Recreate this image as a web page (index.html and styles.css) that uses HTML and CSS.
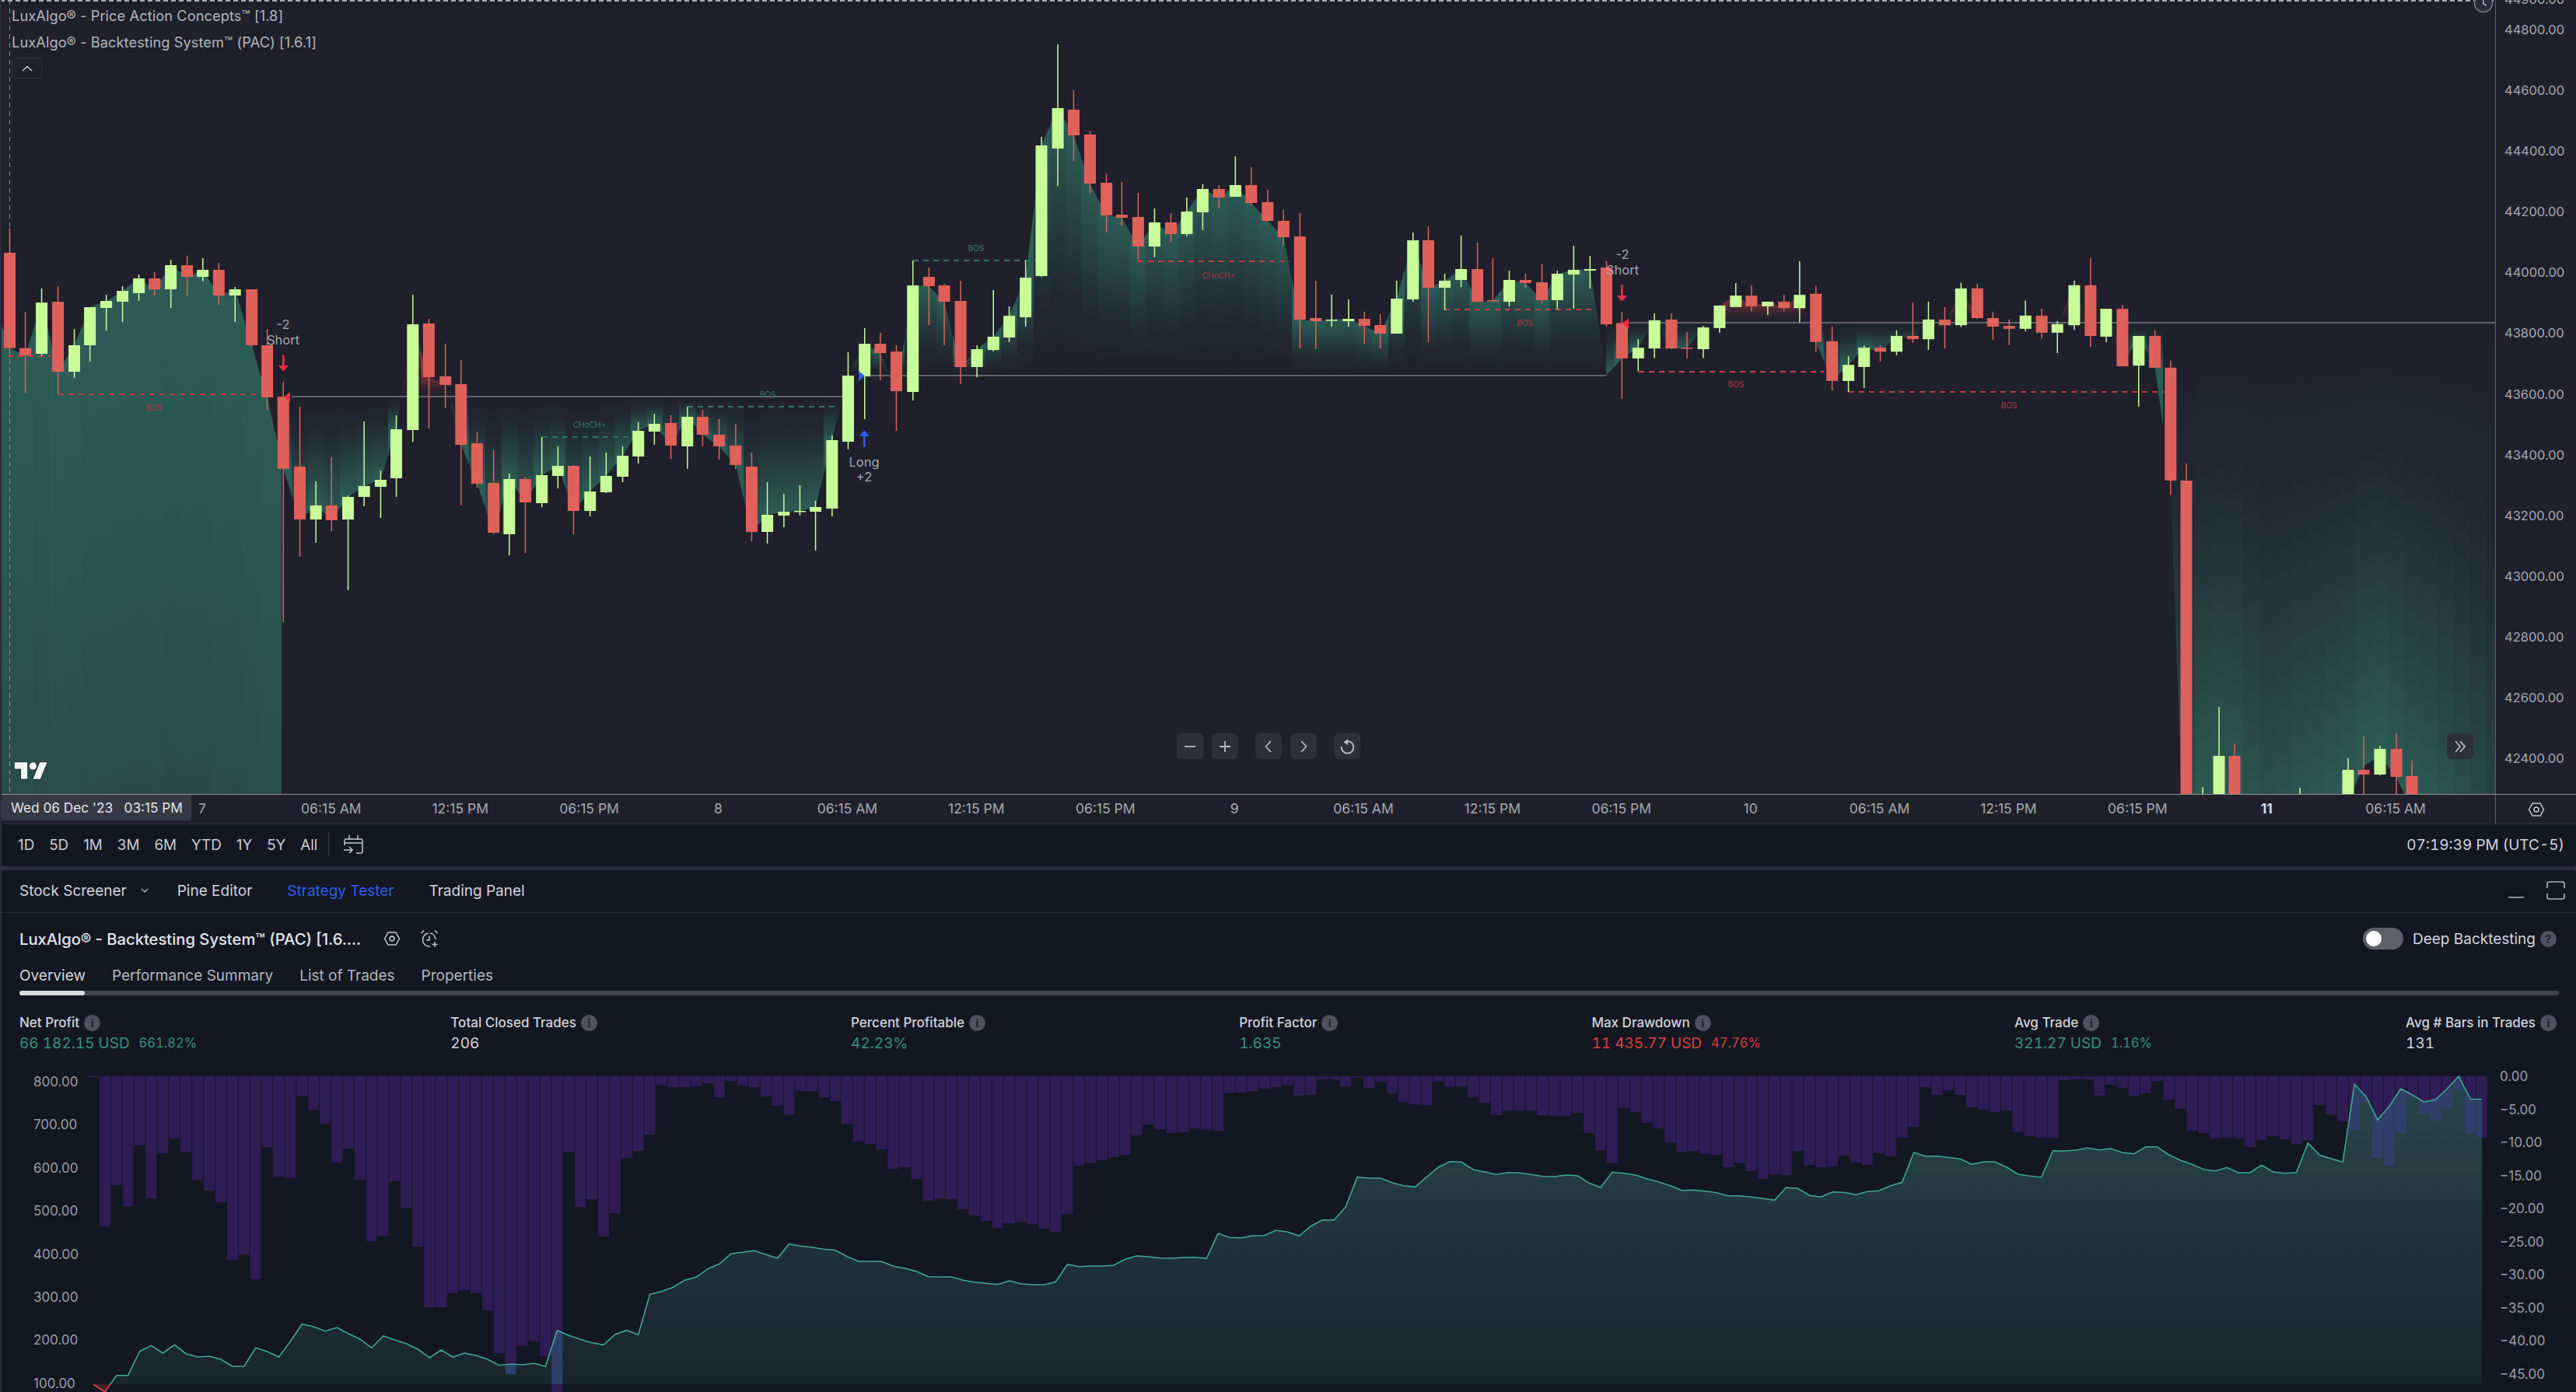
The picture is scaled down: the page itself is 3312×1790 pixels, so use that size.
FILE: index.html
```html
<!DOCTYPE html>
<html lang="en">
<head>
<meta charset="utf-8">
<title>LuxAlgo Backtesting</title>
<link rel="stylesheet" href="styles.css">
</head>
<body>
<div class="app">
  <section class="chart-row">
    <div class="pane">
      <svg id="price" class="price-svg" viewBox="2 0 3206 1021" width="3206" height="1021">
        <defs id="priceDefs"></defs>
        <g id="zones"></g>
        <g class="level-lines">
          <line x1="375" y1="510" x2="1083" y2="510"/>
          <line x1="1116" y1="483" x2="2065" y2="483"/>
          <line x1="2095" y1="415" x2="3208" y2="415"/>
        </g>
        <g class="dash-teal">
          <line x1="697" y1="562" x2="811" y2="562"/>
          <line x1="884" y1="523" x2="1075" y2="523"/>
          <line x1="1174" y1="335" x2="1332" y2="335"/>
        </g>
        <g class="dash-red">
          <line x1="10" y1="458" x2="65" y2="458"/>
          <line x1="75" y1="507" x2="329" y2="507"/>
          <line x1="1463" y1="336" x2="1659" y2="336"/>
          <line x1="1857" y1="398" x2="2048" y2="398"/>
          <line x1="2107" y1="478" x2="2345" y2="478"/>
          <line x1="2377" y1="504" x2="2782" y2="504"/>
        </g>
        <g id="candles"></g>
        <line class="cross-h" x1="0" y1="1" x2="3208" y2="1"/>
        <line class="cross-v" x1="12.5" y1="0" x2="12.5" y2="1021"/>
        <g class="struct-teal">
          <text x="758" y="550">CHoCH+</text>
          <text x="987" y="511">BOS</text>
          <text x="1255" y="323">BOS</text>
        </g>
        <g class="struct-red">
          <text x="198" y="528">BOS</text>
          <text x="1567" y="358">CHoCH+</text>
          <text x="1961" y="419">BOS</text>
          <text x="2232" y="498">BOS</text>
          <text x="2583" y="525">BOS</text>
        </g>
        <g class="trade-label">
          <text x="364" y="423">-2</text>
          <text x="364" y="443">Short</text>
          <text x="2086" y="333">-2</text>
          <text x="2086" y="353">Short</text>
          <text x="1111" y="600">Long</text>
          <text x="1111" y="619">+2</text>
        </g>
        <g class="arrow-red">
          <path d="M363 456h2.500v14H371l-6.700 7.500-6.800-7.500h5.500z"/>
          <path d="M2084 366h2.500v14h5.500l-6.700 7.500-6.800-7.500h5.500z"/>
          <path d="M373 504v13l-8-6.500z"/>
          <path d="M2094 409v14l-8-7z"/>
        </g>
        <path class="arrow-blue" d="M1110 575h2.500v-14h5.500l-6.700-7.500-6.800 7.500h5.500z"/>
        <path class="arrow-blue" d="M1104 477v13l8-6.500z"/>
      </svg>

      <div class="legend">
        <div class="legend-line">LuxAlgo® - Price Action Concepts™ [1.8]</div>
        <div class="legend-line">LuxAlgo® - Backtesting System™ (PAC) [1.6.1]</div>
        <div class="legend-toggle">
          <svg viewBox="0 0 14 8" width="14" height="8"><path d="M1 7l6-5.500L13 7"/></svg>
        </div>
      </div>

      <svg class="tv-logo" viewBox="-1 2 38 22" width="46" height="26">
        <path d="M14 22H7V11H0V4h14v18zM28 22h-8l7.500-18h8L28 22z"/>
        <circle cx="20" cy="8" r="4"/>
      </svg>

      <div class="nav-buttons">
        <div class="nav-group">
          <div class="nav-btn"><svg viewBox="0 0 18 18" width="18" height="18"><path d="M2 9h14"/></svg></div>
          <div class="nav-btn"><svg viewBox="0 0 18 18" width="18" height="18"><path d="M2 9h14M9 2v14"/></svg></div>
        </div>
        <div class="nav-group">
          <div class="nav-btn"><svg viewBox="0 0 18 18" width="18" height="18"><path d="M12 2L5.500 9l6.500 7"/></svg></div>
          <div class="nav-btn"><svg viewBox="0 0 18 18" width="18" height="18"><path d="M6 2l6.500 7L6 16"/></svg></div>
        </div>
        <div class="nav-btn"><svg viewBox="0 0 18 18" width="20" height="20"><path d="M6.500 3.500a7 7 0 1 1-4 5.500"/><path class="solid" d="M10 0.500v7L4.800 4z"/></svg></div>
      </div>
      <div class="nav-btn go-end"><svg viewBox="0 0 18 18" width="18" height="18"><path d="M3 2l6 7-6 7M9 2l6 7-6 7"/></svg></div>
      <svg class="axis-badge" viewBox="0 0 26 26" width="26" height="26"><circle cx="13" cy="13" r="11.500"/><path d="M13 8v6l4 2"/></svg>
    </div>

    <aside class="price-axis">
      <ul class="price-list">
        <li>44900.00</li><li>44800.00</li><li>44600.00</li><li>44400.00</li><li>44200.00</li>
        <li>44000.00</li><li>43800.00</li><li>43600.00</li><li>43400.00</li><li>43200.00</li>
        <li>43000.00</li><li>42800.00</li><li>42600.00</li><li>42400.00</li>
      </ul>
    </aside>
  </section>

  <section class="time-row">
    <div class="time-axis">
      <span>7</span><span>06:15 AM</span><span>12:15 PM</span><span>06:15 PM</span>
      <span>8</span><span>06:15 AM</span><span>12:15 PM</span><span>06:15 PM</span>
      <span>9</span><span>06:15 AM</span><span>12:15 PM</span><span>06:15 PM</span>
      <span>10</span><span>06:15 AM</span><span>12:15 PM</span><span>06:15 PM</span>
      <span class="strong">11</span><span>06:15 AM</span>
      <div class="date-tip">Wed 06 Dec '23&nbsp;&nbsp; 03:15 PM</div>
    </div>
    <div class="axis-settings">
      <svg viewBox="0 0 24 24" width="24" height="24"><path d="M2.500 12L7 4h10l4.500 8-4.500 8H7z"/><circle cx="12" cy="12" r="3"/></svg>
    </div>
  </section>

  <section class="range-bar">
    <div class="ranges">
      <span>1D</span><span>5D</span><span>1M</span><span>3M</span><span>6M</span><span>YTD</span><span>1Y</span><span>5Y</span><span>All</span>
    </div>
    <i class="sep"></i>
    <svg class="goto-icon" viewBox="0 0 28 26" width="28" height="26">
      <path d="M8 1v6M19 1v6M2 14V7.500Q2 6 3.500 6h20Q25 6 25 7.500V22.500Q25 24 23.500 24H17M2 11h23M1 20h11M8 16l4 4-4 4"/>
    </svg>
    <div class="clock">07:19:39 PM (UTC-5)</div>
  </section>

  <section class="panel">
    <nav class="panel-tabs">
      <span class="panel-tab with-caret">Stock Screener
        <svg viewBox="0 0 10 6" width="10" height="6"><path d="M1 1l4 4 4-4"/></svg>
      </span>
      <span class="panel-tab">Pine Editor</span>
      <span class="panel-tab active">Strategy Tester</span>
      <span class="panel-tab">Trading Panel</span>
      <span class="panel-actions">
        <svg viewBox="0 0 20 24" width="20" height="24"><path d="M0 21h20"/></svg>
        <svg viewBox="0 0 24 24" width="24" height="24"><path d="M1 9V3.500Q1 1 3.500 1h17Q23 1 23 3.500V9M1 16v4.500Q1 23 3.500 23h17q2.500 0 2.500-2.500V16"/></svg>
      </span>
    </nav>

    <div class="title-row">
      <div class="strategy-name">LuxAlgo® - Backtesting System™ (PAC) [1.6....</div>
      <svg class="title-icon" viewBox="0 0 24 24" width="24" height="24"><path d="M2.500 12L7 4h10l4.500 8-4.500 8H7z"/><circle cx="12" cy="12" r="3"/></svg>
      <svg class="title-icon" viewBox="0 0 24 24" width="24" height="24"><path d="M11 5a8.500 8.500 0 1 0 2 17M13 5a8.500 8.500 0 0 1 7 8M1.500 5L5 1.500M22.500 5L19 1.500M12 8.500V14H8M19 16v7M15.500 19.500h7"/></svg>
      <div class="deep">
        <span class="toggle"><span class="thumb"></span></span>
        <span class="deep-label">Deep Backtesting</span>
        <span class="hint">?</span>
      </div>
    </div>

    <nav class="sub-tabs">
      <span class="sub-tab current">Overview</span>
      <span class="sub-tab">Performance Summary</span>
      <span class="sub-tab">List of Trades</span>
      <span class="sub-tab">Properties</span>
    </nav>
    <div class="scroll-track"><div class="scroll-thumb"></div></div>

    <div class="stats">
      <div class="stat">
        <div class="stat-label">Net Profit <span class="hint">i</span></div>
        <div class="stat-value up">66 182.15 USD<small>661.82%</small></div>
      </div>
      <div class="stat">
        <div class="stat-label">Total Closed Trades <span class="hint">i</span></div>
        <div class="stat-value">206</div>
      </div>
      <div class="stat">
        <div class="stat-label">Percent Profitable <span class="hint">i</span></div>
        <div class="stat-value up">42.23%</div>
      </div>
      <div class="stat">
        <div class="stat-label">Profit Factor <span class="hint">i</span></div>
        <div class="stat-value up">1.635</div>
      </div>
      <div class="stat">
        <div class="stat-label">Max Drawdown <span class="hint">i</span></div>
        <div class="stat-value down">11 435.77 USD<small>47.76%</small></div>
      </div>
      <div class="stat">
        <div class="stat-label">Avg Trade <span class="hint">i</span></div>
        <div class="stat-value up">321.27 USD<small>1.16%</small></div>
      </div>
      <div class="stat">
        <div class="stat-label">Avg # Bars in Trades <span class="hint">i</span></div>
        <div class="stat-value">131</div>
      </div>
    </div>

    <div class="equity-row">
      <ul class="eq-axis left">
        <li>800.00</li><li>700.00</li><li>600.00</li><li>500.00</li><li>400.00</li><li>300.00</li><li>200.00</li><li>100.00</li>
      </ul>
      <svg id="equity" class="equity-svg" viewBox="112 1375 3093 415" width="3093" height="415"></svg>
      <ul class="eq-axis right">
        <li>0.00</li><li>−5.00</li><li>−10.00</li><li>−15.00</li><li>−20.00</li><li>−25.00</li><li>−30.00</li><li>−35.00</li><li>−40.00</li><li>−45.00</li>
      </ul>
    </div>
  </section>
</div>
<script src="chart.js"></script>
</body>
</html>
```

FILE: styles.css
```css
* { box-sizing: border-box; }
html, body { margin: 0; padding: 0; background: #2a2d39; }
body { font-family: Inter, "Liberation Sans", sans-serif; color: #d1d4dc; overflow: hidden; }
ul { list-style: none; margin: 0; padding: 0; }
svg { display: block; }

.app { width: 3312px; height: 1790px; padding-left: 2px; display: flex; flex-direction: column; }

/* main chart */
.chart-row { height: 1021px; display: flex; background: #1f202c; }
.pane { position: relative; width: 3206px; height: 1021px; }
.price-svg { position: absolute; inset: 0; }
.level-lines line { stroke: #62636c; stroke-width: 2; }
.dash-teal line { stroke: #2f7466; stroke-width: 2; stroke-dasharray: 7 6; }
.dash-red line { stroke: #c23f47; stroke-width: 2; stroke-dasharray: 7 6; }
.cross-h { stroke: #a9abb3; stroke-width: 2; stroke-dasharray: 6 4; }
.cross-v { stroke: #8f9199; stroke-width: 1; stroke-dasharray: 6 5; }
.struct-teal text, .struct-red text { font-size: 10px; text-anchor: middle; }
.struct-teal text { fill: #347f71; }
.struct-red text { fill: #b33a42; }
.trade-label text { font-size: 16.500px; fill: #a5a7b0; text-anchor: middle; }
.arrow-red path { fill: #ef2b46; }
.arrow-blue { fill: #2f5ceb; }

.legend { position: absolute; left: 13px; top: 9px; display: flex; flex-direction: column; align-items: flex-start; }
.legend-line { font-size: 18.200px; letter-spacing: 0.1px; line-height: 22px; height: 34px; color: #b2b5be; white-space: nowrap; }
.legend-toggle { width: 38px; height: 27px; margin: -3px 0 0 1px; border: 1px solid #2f323f; border-radius: 4px; display: flex; align-items: center; justify-content: center; }
.legend-toggle path { fill: none; stroke: #c6c8d0; stroke-width: 1.5; }

.tv-logo { position: absolute; left: 15px; top: 978px; }
.tv-logo path, .tv-logo circle { fill: #f4f5f7; stroke: #151722; stroke-width: 1.2; paint-order: stroke; }

.nav-buttons { position: absolute; left: 1511px; top: 943px; display: flex; gap: 22px; }
.nav-group { display: flex; gap: 11px; }
.nav-btn { width: 34px; height: 33px; border-radius: 6px; background: #2d2f3b; display: flex; align-items: center; justify-content: center; }
.nav-btn path { fill: none; stroke: #b7bac3; stroke-width: 1.8; }
.nav-btn path.solid { fill: #b7bac3; stroke: none; }
.go-end { position: absolute; left: 3144px; top: 943px; }

.price-axis { position: relative; width: 104px; height: 1021px; border-left: 1px solid #5f6069; overflow: hidden; }
.price-list { margin-top: -40px; padding-left: 11px; }
.price-list li { font-size: 16.500px; line-height: 78.1px; height: 78.1px; color: #a5a8b1; white-space: nowrap; }
.price-list li:first-child { height: 39px; }
.axis-badge { position: absolute; left: 3178px; top: -9px; }
.axis-badge circle { fill: #2a2d39; stroke: #787b85; stroke-width: 1.5; }
.axis-badge path { fill: none; stroke: #b2b5be; stroke-width: 1.5; }

/* time axis */
.time-row { height: 39px; display: flex; background: #1f202c; border-top: 1px solid #8d8f97; border-bottom: 1px solid #2b2d38; }
.time-axis { position: relative; width: 3206px; padding: 0 0 2px 175px; display: grid; grid-template-columns: repeat(18, 165.9px); align-items: center; font-size: 17.500px; color: #a5a8b1; text-align: center; }
.time-axis .strong { color: #d1d4dc; font-weight: 700; }
.date-tip { position: absolute; left: 0; top: 0; width: 244px; height: 33px; line-height: 33px; padding-left: 12px; background: #363945; border-radius: 0 0 4px 4px; color: #e3e5ea; font-size: 17.200px; text-align: left; white-space: nowrap; }
.axis-settings { width: 104px; border-left: 1px solid #5f6069; display: flex; align-items: center; justify-content: center; padding-left: 1px; }
.axis-settings path, .axis-settings circle, .title-icon path, .title-icon circle { fill: none; stroke: #c3c6ce; stroke-width: 1.5; }

/* range bar */
.range-bar { height: 54px; display: flex; align-items: center; background: #131722; padding: 0 15px 2px 21px; border-radius: 0 0 4px 4px; }
.ranges { display: flex; gap: 19px; font-size: 18.800px; color: #c9ccd4; }
.sep { width: 1px; height: 31px; background: #363a45; margin: 0 18px 0 14px; }
.goto-icon path { fill: none; stroke: #c3c6ce; stroke-width: 1.5; }
.clock { margin-left: auto; font-size: 19px; font-variant-numeric: tabular-nums; color: #d1d4dc; }

/* bottom panel */
.panel { flex: 1; margin-top: 5px; background: #131722; border-radius: 4px 4px 0 0; display: flex; flex-direction: column; min-height: 0; }
.panel-tabs { height: 55px; flex: none; display: flex; align-items: center; gap: 45px; padding: 0 14px 2px 23px; border-bottom: 1px solid #2a2d38; font-size: 19px; color: #d1d4dc; }
.panel-tab { white-space: nowrap; }
.panel-tab.active { color: #2f5fea; }
.with-caret { display: flex; align-items: center; gap: 18px; margin-right: -8px; }
.with-caret path { fill: none; stroke: #b2b5be; stroke-width: 1.4; }
.panel-actions { margin-left: auto; display: flex; align-items: center; gap: 29px; }
.panel-actions path { fill: none; stroke: #b2b5be; stroke-width: 1.6; }

.title-row { height: 68px; flex: none; display: flex; align-items: center; padding: 0 25px 2px 23px; }
.strategy-name { width: 442px; font-size: 20.200px; font-weight: 500; color: #e3e5ea; white-space: nowrap; }
.title-icon { margin-right: 24px; }
.title-icon:first-of-type { margin-left: 25px; }
.deep { margin-left: auto; display: flex; align-items: center; }
.toggle { width: 52px; height: 28px; border-radius: 14px; background: #5d606b; padding: 4px; display: block; }
.thumb { display: block; width: 20px; height: 20px; border-radius: 50%; background: #fff; }
.deep-label { margin: 0 6px 0 12px; font-size: 19px; color: #d1d4dc; }
.hint { display: inline-flex; flex: none; width: 21px; height: 21px; border-radius: 50%; background: #4f525e; color: #1c1f2a; font-size: 14px; font-weight: 700; align-items: center; justify-content: center; }

.sub-tabs { height: 26px; flex: none; display: flex; align-items: center; gap: 34px; padding: 0 0 2px 23px; font-size: 19px; color: #b2b5be; }
.sub-tab.current { color: #d1d4dc; }
.scroll-track { height: 6px; flex: none; margin: 6px 22px 0 23px; border-radius: 3px; background: #41444f; }
.scroll-thumb { width: 84px; height: 6px; border-radius: 3px; background: #d8dae0; }

.stats { flex: none; display: flex; justify-content: space-between; padding: 23px 25px 0 23px; }
.stat-label { height: 24px; display: flex; align-items: center; gap: 6px; font-size: 17px; font-weight: 500; color: #d1d4dc; white-space: nowrap; }
.stat-value { height: 26px; margin-top: 1px; display: flex; align-items: center; font-size: 19px; font-variant-numeric: tabular-nums; color: #d1d4dc; white-space: nowrap; }
.stat-value small { margin-left: 12px; font-size: 16.600px; }
.up { color: #37917f; }
.down { color: #dc4041; }

.equity-row { flex: 1; min-height: 0; margin-top: 21px; display: grid; grid-template-columns: 110px 3093px 107px; }
.equity-svg { width: 3093px; height: 415px; }
.eq-axis { font-size: 17px; color: #9a9da6; white-space: nowrap; }
.eq-axis.left { margin-top: -11px; padding-left: 41px; }
.eq-axis.left li { height: 55.4px; line-height: 55.4px; }
.eq-axis.right { margin-top: -12px; padding-left: 9px; }
.eq-axis.right li { height: 42.55px; line-height: 42.55px; }
```

FILE: chart.js
```js
/* Candle readings: [colour, x, bodyTop, bodyBottom, wickTop, wickBottom, closeOverride, glowFrom] */
var candles = [];
function seg(x0, y0, fx, fy, rows) {
  rows.forEach(function (r) {
    var cl = r[6] !== undefined ? y0 + r[6] / fy : (r[0] === 'g' ? y0 + r[2] / fy : y0 + r[3] / fy);
    candles.push({ c: r[0], x: x0 + r[1] / fx, t: y0 + r[2] / fy, b: y0 + r[3] / fy, wt: y0 + r[4] / fy, wb: y0 + r[5] / fy, close: cl, glow: r[7] });
  });
}
seg(0, 0, 1, 1, [['g', -8, 2000, 2001, 2000, 2001, 390]]);
seg(0, 0, 2.24, 3, [
  ['r',28,975,1343,880,1360],['r',73,1343,1371,1203,1515],['g',120,1167,1365,1113,1373],['r',167,1164,1434,1104,1520],
  ['g',214,1332,1434,1270,1458],['g',259,1185,1332,1185,1395],['g',306,1161,1188,1137,1275],['g',353,1122,1164,1104,1242],
  ['g',400,1074,1131,1059,1161],['r',445,1074,1116,1050,1140],['g',492,1023,1116,1002,1188],['r',539,1023,1068,987,1140],
  ['g',584,1041,1068,996,1086],['r',630,1041,1140,1014,1176],['g',677,1116,1140,1107,1242],['r',725,1116,1332,1116,1338]
]);
seg(300, 300, 1.742, 3, [
  ['r',76,432,633,370,683],['r',112,630,908,573,1500],['r',149,900,1104,669,1248],['g',185,1050,1104,957,1194],
  ['r',220,1050,1107,864,1149],['g',257,1017,1104,1011,1377],['g',293,975,1017,726,1053],['g',330,951,978,915,1098],
  ['g',365,756,945,702,1017],['g',402,351,759,237,804],['r',438,348,555,330,753],['r',475,552,585,426,675],
  ['r',510,582,816,489,1050],['r',546,810,966,768,981],['r',583,963,1155,837,1161],['g',618,948,1161,927,1242],
  ['r',654,948,1038,939,1233],['g',691,933,1041,786,1056],['g',727,897,936,822,984],['r',762,897,1071,894,1161],
  ['g',799,996,1071,861,1092],['g',835,936,999,846,1002],['g',872,858,939,822,960],['g',907,762,861,729,888],
  ['g',943,735,765,696,816],['r',980,732,819,702,870],['g',1017,708,822,669,909],['r',1051,708,777,681,822],
  ['r',1088,777,822,717,873],['r',1125,819,894,735,909],['r',1161,900,1152,846,1188],['g',1196,1086,1152,960,1197],
  ['g',1233,1074,1089,1005,1134],['g',1269,1071,1074,972,1089],['g',1304,1056,1074,1032,1224],['g',1341,798,1062,780,1092],
  ['g',1377,549,804,459,834],['g',1414,426,552,366,717],['r',1449,426,462,384,567],['r',1485,456,609,432,762],
  ['g',1522,201,612,105,645],['r',1558,168,204,132,354]
]);
seg(1200, 0, 1.568, 3, [
  ['r',22,1101,1164,1095,1332],['r',55,1161,1416,1083,1482],['g',88,1347,1416,1332,1455],['g',121,1299,1350,1119,1355],
  ['g',153,1218,1302,1182,1320],['g',186,1071,1224,1005,1260],['g',218,561,1065,528,1068],['g',251,417,573,171,717],
  ['r',283,423,522,348,621],['r',316,519,708,504,747],['r',349,705,831,669,897],['r',380,828,840,702,870],
  ['r',413,837,951,744,1005],['g',446,858,951,804,993],['r',479,858,903,822,936],['g',511,816,903,762,912],
  ['g',543,729,819,711,888],['r',576,729,762,714,804],['g',609,714,759,603,760],['r',641,714,783,645,792],
  ['r',674,780,852,732,855],['r',706,852,915,810,945],['r',739,912,1233,822,1344],['r',771,1227,1239,1083,1347],
  ['g',803,1233,1236,1137,1260],['g',837,1230,1239,1155,1260],['r',869,1230,1257,1203,1326],['r',901,1254,1287,1212,1344],
  ['g',934,1152,1287,1083,1287],['g',967,927,1155,897,1164],['r',998,927,1110,873,1320],['g',1031,1083,1110,1056,1197],
  ['g',1064,1038,1080,909,1107],['r',1097,1038,1164,936,1167],['r',1128,1158,1161,996,1161],['g',1161,1080,1164,1044,1182],
  ['r',1194,1080,1092,1056,1110],['r',1227,1089,1158,1020,1170],['g',1258,1056,1158,1044,1194],['g',1291,1041,1059,948,1191],
  ['g',1324,1038,1044,987,1113],['r',1357,1032,1251,1008,1260,1448]
]);
seg(2000, 280, 1.195, 2.178, [
  ['r',102,295,394,264,507],['g',127,364,394,340,430],['g',152,287,366,268,393],['r',178,285,366,268,368],
  ['r',202,364,366,320,394],['g',227,307,368,303,393],['g',252,246,309,246,322],['g',277,218,250,183,250],
  ['r',301,218,248,190,262],['g',326,235,248,235,272],['r',351,235,253,216,262],['g',375,216,253,122,293],
  ['r',400,213,348,190,375],['r',425,346,457,304,484],['g',450,412,457,388,488],['g',474,364,418,358,477],
  ['r',499,364,375,358,403],['g',524,331,375,315,385],['r',549,331,340,237,350],['g',573,285,340,235,370],
  ['r',598,285,301,250,366],['g',623,198,301,182,306],['r',648,198,281,185,284],['r',672,281,305,264,342],
  ['r',697,303,311,285,357],['g',722,274,311,232,318],['r',747,274,322,255,338],['g',771,298,322,290,379],
  ['g',797,189,301,176,314],['r',822,189,331,113,362],['g',846,255,333,255,348],['r',871,255,416,244,416],
  ['g',896,331,414,331,529],['r',921,331,420,316,420],['r',945,420,736,400,777,736,1100]
]);
/* Final leg: bodies run past the bottom of the pane */
seg(0, 0, 1, 1, [
  ['r',2811,618,1200,596,1200,1200],['g',2832,1100,1200,1012,1200,1045],['g',2853,972,1200,909,1200,1030],['r',2873,972,1200,956,1200,1040],
  ['g',2894,1100,1200,1100,1200,1100],['g',2915,1100,1200,1100,1200,1140],['g',2936,1100,1200,1100,1200,1120],['g',2957,1100,1200,1013,1200,1090],
  ['g',2978,1100,1200,1100,1200,1075],['g',2999,1100,1200,1100,1200,1050],['g',3019,990,1100,975,1100,1030],['r',3039,990,996,947,1100,985],
  ['g',3060,963,996,959,997,972],['r',3081,963,999,943,1021,1000],['r',3101,998,1100,978,1100,1040],
  ['g',3122,1100,1200,1100,1200,1060],['g',3143,1100,1200,1100,1200,1100],['g',3164,1100,1200,1100,1200,1150],
  ['g',3185,1100,1200,1100,1200,1220],['g',3206,1100,1200,1100,1200,1300]
]);

var GREEN = '#c8fc98', RED = '#e0605a';
var TEAL = '#2c5c55', DARKRED = '#84323c';
var zones = [
  { a: -10, b: 362, L: 3400, d: 1 },
  { a: 364, b: 1090, L: 510, d: -1 },
  { a: 1090, b: 2065, L: 483, d: 1 },
  { a: 2065, b: 3208, L: 415, d: -1 }
];
function priceAt(x) {
  for (var i = 0; i < candles.length - 1; i++) {
    var p = candles[i], q = candles[i + 1];
    if (x >= p.x && x <= q.x) return p.close + (q.close - p.close) * (x - p.x) / (q.x - p.x);
  }
  return candles[candles.length - 1].close;
}
var defs = '', zoneSvg = '', gid = 0;
function column(x, w, top, h, from, to, colour) {
  var id = 'g' + (gid++);
  defs += '<linearGradient id="' + id + '" gradientUnits="userSpaceOnUse" x1="0" x2="0" y1="' + from.toFixed(1) + '" y2="' + to.toFixed(1) + '">' +
    '<stop offset="0" stop-color="' + colour + '"/><stop offset="0.35" stop-color="' + colour + '" stop-opacity="0.55"/>' +
    '<stop offset="0.7" stop-color="' + colour + '" stop-opacity="0.12"/><stop offset="1" stop-color="' + colour + '" stop-opacity="0"/></linearGradient>';
  return '<rect x="' + x + '" y="' + top.toFixed(1) + '" width="' + w + '" height="' + h.toFixed(1) + '" fill="url(#' + id + ')"/>';
}
zones.forEach(function (z, n) {
  var inside = candles.filter(function (c) { return c.x > z.a && c.x < z.b; });
  var pts = [[z.a, n === 3 ? 483 : priceAt(z.a)]];
  inside.forEach(function (c) { pts.push([c.x, c.close]); });
  pts.push([z.b, priceAt(z.b)]);
  var poly = pts.map(function (p) { return p[0].toFixed(1) + ',' + p[1].toFixed(1); }).join(' ') +
    ' ' + z.b + ',' + z.L + ' ' + z.a + ',' + z.L;
  defs += '<clipPath id="zone' + n + '"><polygon points="' + poly + '"/></clipPath>';
  var body = '';
  inside.forEach(function (c, i) {
    var x0 = i ? Math.round((inside[i - 1].x + c.x) / 2) : z.a;
    var x1 = i < inside.length - 1 ? Math.round((c.x + inside[i + 1].x) / 2) : z.b;
    var ref = c.glow !== undefined ? c.glow : c.close;
    var aboveFrom = ref < z.L ? Math.min(ref, z.L - 30) : z.L - 30;
    var belowFrom = ref > z.L ? Math.max(ref, z.L + 30) : z.L + 30;
    body += column(x0, x1 - x0, 0, Math.min(z.L, 1021), aboveFrom, z.L, z.d > 0 ? TEAL : DARKRED);
    if (z.L < 1021) body += column(x0, x1 - x0, z.L, 1021 - z.L, belowFrom, z.L, z.d > 0 ? DARKRED : TEAL);
  });
  zoneSvg += '<g clip-path="url(#zone' + n + ')">' + body + '</g>';
});
document.getElementById('priceDefs').innerHTML = defs;
document.getElementById('zones').innerHTML = zoneSvg;

var cs = '';
candles.forEach(function (c) {
  if (c.x < 0) return;
  var col = c.c === 'g' ? GREEN : RED;
  cs += '<rect x="' + (c.x - 0.75).toFixed(1) + '" y="' + c.wt.toFixed(1) + '" width="1.5" height="' + (c.wb - c.wt).toFixed(1) + '" fill="' + col + '"/>';
  var h = Math.max(c.b - c.t, 1.5);
  cs += '<rect x="' + (c.x - 7.5).toFixed(1) + '" y="' + c.t.toFixed(1) + '" width="15" height="' + h.toFixed(1) + '" fill="' + col + '"/>';
});
document.getElementById('candles').innerHTML = cs;

/* Equity pane: readings converted from crops taken with top = 1360 (A, C) and 1380 (B) */
var ddA = [1,651,492,573,339,543,369,312,363,471,513,558,780,759,855,345,459,465,147,201,255,405,351,471,708,687,477,579,729,963,963,909,897,909,975,1140,1221,1113,1095,1152,1290,363,576,546,690,600,387,360,297,108,114,114,110];
var ddB = [39,93,30,48,54,90,126,159,69,69,93,108,195,264,273,294,369,363,408,492,483,486,525,549,570,597,579,573,582,600,612,543,357,345,336,324,315,240,198,216,
  231,228,213,219,222,78,75,69,60,54,45,87,84,24,24,51,18,57,33,78,111,120,123,33,51,51,93,114,162,144,144,144,162,165,165,153,231,297,345,135,150,
  192,213,267,303,300,312,315,363,345,378,408,390,393,300,354,363,360,318,345,354,309,321,249,207,54,84,66,84,132,141,150,144,228,243,249,249,27,24,24,87,45];
var ddC = [117,147,138,90,162,198,282,291,312,309,312,345,318,303,315,333,318,183,219,246,279,174,387,417,291,153,216,243,195,126,294,309];
var depth = [1].concat(
  ddA.slice(1).map(function (z) { return (z - 72) / 3; }),
  ddB.map(function (z) { return (z - 12) / 3; }),
  ddC.map(function (z) { return (z - 72) / 3; })
);
var eqA = [1260,1290,1226,1226,1133,1111,1140,1108,1143,1155,1152,1164,1191,1191,1120,1134,1155,1095,1028,1038,1055,1041,1065,1086,1120,1074,1089,1104,1125,1158,1128,1155,1140,1149,1164,1187,1182,1185,1180,1191,1052,1072,1087,1100,1108,1068,1052,1069,913,902,886,859,847];
var eqB = [755,735,697,691,685,700,714,659,667,672,679,683,707,726,726,727,745,753,765,785,786,786,799,806,811,815,801,812,816,816,805,738,746,744,744,741,718,705,708,713,
  714,711,710,715,619,634,635,627,626,606,613,628,590,566,566,516,401,405,405,422,434,439,400,363,341,343,372,381,391,383,385,391,398,399,393,395,424,441,382,386,393,
  408,419,434,452,451,455,461,473,473,478,484,490,441,445,472,478,458,460,469,457,454,434,421,306,320,320,325,331,352,342,342,362,390,397,402,299,300,297,288,296,291];
var eqC = [366,371,344,344,375,396,412,431,437,424,444,444,415,441,446,443,330,376,390,403,103,150,240,188,120,144,171,162,120,72,160,161];
var eqY = eqA.map(function (z) { return 1360 + z / 3; })
  .concat(eqB.map(function (z) { return 1380 + z / 3; }), eqC.map(function (z) { return 1360 + z / 3; }));
var PITCH = 14.908, X0 = 120;
var line = eqY.map(function (y, i) { return (X0 + PITCH * i).toFixed(1) + ',' + y.toFixed(1); }).join(' ');
var areaPts = line + ' ' + (X0 + PITCH * 206).toFixed(1) + ',1780 ' + X0 + ',1780';
var bars = '';
depth.forEach(function (d, i) {
  bars += '<rect x="' + (X0 + PITCH * i - 7).toFixed(1) + '" y="1384" width="13.9" height="' + d.toFixed(1) + '"/>';
});
document.getElementById('equity').innerHTML =
  '<defs><linearGradient id="eqFill" gradientUnits="userSpaceOnUse" x1="0" x2="0" y1="1384" y2="1780">' +
  '<stop offset="0" stop-color="#28464a"/><stop offset="0.3" stop-color="#253c41"/><stop offset="0.55" stop-color="#20313a"/><stop offset="1" stop-color="#19252d"/></linearGradient>' +
  '<clipPath id="eqArea"><polygon points="' + areaPts + '"/></clipPath>' +
  '<clipPath id="aboveBase"><rect x="100" y="1370" width="3200" height="410"/></clipPath>' +
  '<clipPath id="belowBase"><rect x="100" y="1780" width="300" height="20"/></clipPath></defs>' +
  '<g fill="#2f1c55">' + bars + '</g>' +
  '<polygon points="' + areaPts + '" fill="url(#eqFill)" clip-path="url(#aboveBase)"/>' +
  '<polygon points="' + areaPts + '" fill="#47202c" clip-path="url(#belowBase)"/>' +
  '<g fill="#30406b" clip-path="url(#eqArea)"><g clip-path="url(#aboveBase)">' + bars + '</g></g>' +
  '<polyline points="' + line + '" fill="none" stroke="#3fa693" stroke-width="1.6" clip-path="url(#aboveBase)"/>' +
  '<polyline points="' + line + '" fill="none" stroke="#e4454a" stroke-width="1.6" clip-path="url(#belowBase)"/>';
```
